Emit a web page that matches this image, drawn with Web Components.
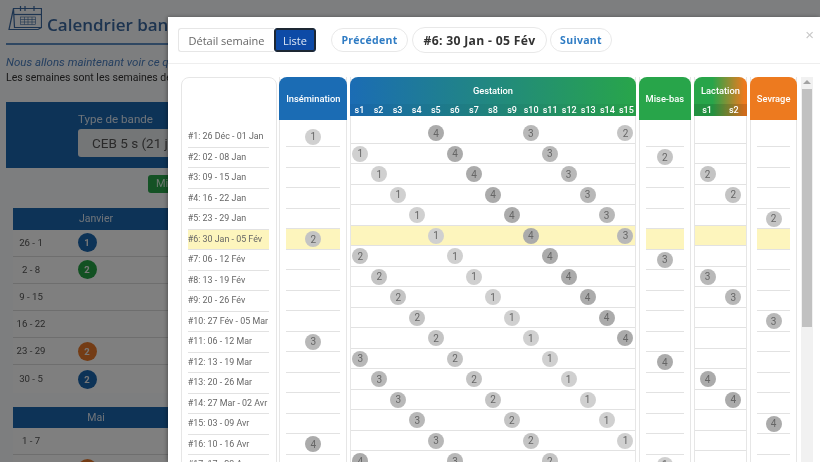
<!DOCTYPE html>
<html lang="fr">
<head>
<meta charset="utf-8">
<title>Calendrier de bande</title>
<style>
    html, body { margin: 0; height: 100%; overflow: hidden; }
    body { font-family: Roboto, "Liberation Sans", sans-serif; }
</style>
</head>
<body>
<band-page></band-page>
<planning-modal>
    <seg-toggle slot="nav"></seg-toggle>
    <pill-btn slot="nav" style="margin-left:15px;width:77px">Précédent</pill-btn>
    <pill-btn slot="nav" kind="title" style="margin-left:4px;width:135px">#6: 30 Jan - 05 Fév</pill-btn>
    <pill-btn slot="nav" style="margin-left:3px;width:62px">Suivant</pill-btn>

    <week-labels></week-labels>
    <phase-col label="Insémination" w="68" bg="#1b6cb4" kind="insem"></phase-col>
    <phase-col label="Gestation" w="286" bg="linear-gradient(90deg,#1b6cb4,#28a54a)" kind="gest" subs="15"></phase-col>
    <phase-col label="Mise-bas" w="52.4" bg="#28a54a" kind="mise"></phase-col>
    <phase-col label="Lactation" w="53.5" bg="linear-gradient(90deg,#28a54a 35%,#ed7a1f 95%)" kind="lact" subs="2"></phase-col>
    <phase-col label="Sevrage" w="47.4" bg="#ed7a1f" kind="sev"></phase-col>
    <fake-scroll></fake-scroll>
</planning-modal>

<script>
const WEEKS = ["26 Déc - 01 Jan", "02 - 08 Jan", "09 - 15 Jan", "16 - 22 Jan", "23 - 29 Jan", "30 Jan - 05 Fév",
    "06 - 12 Fév", "13 - 19 Fév", "20 - 26 Fév", "27 Fév - 05 Mar", "06 - 12 Mar", "13 - 19 Mar", "20 - 26 Mar",
    "27 Mar - 02 Avr", "03 - 09 Avr", "10 - 16 Avr", "17 - 23 Avr"];
const CURRENT = 6;

// a batch starts every 5 weeks and the whole cycle loops over 20 weeks
function batchAt(row, offset) {
    for (let b = 1; b <= 4; b++) {
        const start = 1 + 5 * (b - 1);
        if ((start + offset - 1) % 20 + 1 === row) return b;
    }
    return 0;
}

class BatchDot extends HTMLElement {
    connectedCallback() {
        const n = this.getAttribute("n");
        const bg = { 1: "#d0d0d0", 2: "#c4c4c4", 3: "#b8b8b8", 4: "#ababab" }[n];
        this.attachShadow({ mode: "open" }).innerHTML = `
            <style>
                :host {
                    display: flex;
                    width: 16px;
                    height: 16px;
                    border-radius: 50%;
                    align-items: center;
                    justify-content: center;
                    background: ${bg};
                    color: #666;
                    font: 400 10px Roboto, sans-serif;
                }
            </style>
            <slot>${n}</slot>`;
    }
}
customElements.define("batch-dot", BatchDot);

class BandPage extends HTMLElement {
    constructor() {
        super();
        const rows1 = [["26 - 1", "#1a66ae", 1], ["2 - 8", "#25a244", 2], ["9 - 15"], ["16 - 22"], ["23 - 29", "#e8792a", 2], ["30 - 5", "#1a66ae", 2]];
        const rows2 = [["1 - 7"], ["8 - 14", "#e8792a", 1]];
        const row = r => `<div class="row"><span class="d">${r[0]}</span>${r[1] ? `<span class="b" style="background:${r[1]}">${r[2]}</span>` : ""}</div>`;
        this.attachShadow({ mode: "open" }).innerHTML = `
            <style>
                :host {
                    display: block;
                    width: 820px;
                    height: 462px;
                    overflow: hidden;
                    background: #fbfcfe;
                    color: #444;
                    font: 400 11.5px Roboto, sans-serif;
                    filter: blur(.4px);
                }
                .title {
                    display: flex;
                    align-items: flex-end;
                    gap: 5px;
                    height: 31px;
                    margin: 0 6px;
                    padding-left: 2px;
                    padding-top: 5px;
                    box-sizing: border-box;
                }
                h1 {
                    margin: 0 0 -5px;
                    font: 600 17px "Open Sans", sans-serif;
                    color: #3a68a0;
                    white-space: nowrap;
                }
                hr {
                    margin: 12px 6px 0;
                    border: 0;
                    height: 2px;
                    background: #5e8fc4;
                }
                .lead { margin: 10px 6px 0; line-height: 15px; white-space: nowrap; }
                .lead i { color: #4a7fc0; display: block; }
                .lead span { display: block; font-size: 10.5px; color: #333; }
                .box {
                    margin: 17px 6px 0;
                    height: 66px;
                    background: #1a66ae;
                    color: #dbe6f2;
                    padding: 10px 0 0 72px;
                    box-sizing: border-box;
                }
                .box label { display: block; line-height: 14px; font-size: 11.6px; }
                .sel {
                    width: 130px;
                    height: 28px;
                    margin-top: 3px;
                    background: #e9ecef;
                    border-radius: 3px;
                    color: #555;
                    font-size: 13.5px;
                    line-height: 28px;
                    padding-left: 14px;
                    white-space: nowrap;
                }
                .btn {
                    margin: 7px 0 0 148px;
                    width: 60px;
                    height: 18px;
                    border-radius: 3px;
                    background: #28a54a;
                    color: #d8f0de;
                    font-size: 11px;
                    line-height: 18px;
                    padding-left: 8px;
                }
                .mon {
                    margin: 15px 0 0 13px;
                    width: 166px;
                }
                .mon + .mon { margin-top: 14px; }
                .head {
                    height: 21.5px;
                    background: #1a66ae;
                    color: #dbe6f2;
                    text-align: center;
                    font-size: 10.5px;
                    line-height: 21px;
                }
                .row {
                    display: flex;
                    align-items: center;
                    height: 27.2px;
                    box-sizing: border-box;
                    border-bottom: 1px solid #ddd;
                    background: #fff;
                }
                .row:last-child { border-bottom: 0; }
                .d { width: 36px; text-align: center; color: #555; font-size: 9.6px; padding-bottom: 1px; }
                .b {
                    display: flex;
                    width: 19px;
                    height: 19px;
                    margin-left: 28.5px;
                    border-radius: 50%;
                    align-items: center;
                    justify-content: center;
                    color: #eee;
                    font-size: 9.5px;
                    font-weight: 700;
                }
            </style>
            <div class="title">
                <svg width="34" height="26" viewBox="0 0 34 26" fill="none" stroke="#3a68a0" stroke-width="1.2">
                    <path d="M5.5 3.5H33.5V22.5H6.5Z M5.5 3.5L1 24.5H30L33.5 22.5"/>
                    <path d="M12.5 1V6 M17 1V6 M26 1V6"/>
                    <path d="M6 9.5H33.5"/>
                    <rect x="12.5" y="12" width="15" height="7.5" stroke-width=".6"/>
                    <path d="M12.5 14.5H27.5 M12.5 17H27.5 M16.5 12V19.5 M20 12V19.5 M24 12V19.5" stroke-width=".6"/>
                </svg>
                <h1>Calendrier bande</h1>
            </div>
            <hr>
            <div class="lead"><i>Nous allons maintenant voir ce que</i><span>Les semaines sont les semaines de</span></div>
            <div class="box"><label>Type de bande</label><div class="sel">CEB 5 s (21 j)</div></div>
            <div class="btn">Mise-bas</div>
            <div class="mon"><div class="head">Janvier</div>${rows1.map(row).join("")}</div>
            <div class="mon"><div class="head">Mai</div>${rows2.map(row).join("")}</div>`;
    }
}
customElements.define("band-page", BandPage);

class SegToggle extends HTMLElement {
    constructor() {
        super();
        this.attachShadow({ mode: "open" }).innerHTML = `
            <style>
                :host { display: flex; height: 24px; font: 400 11px "Open Sans", sans-serif; }
                div { display: flex; align-items: center; justify-content: center; box-sizing: border-box; }
                .a { width: 96px; border: 1px solid #e6e6e6; border-right: 0; border-radius: 3px 0 0 3px; color: #666; }
                .b { width: 42px; background: #0d4aa6; border: 1px solid #1d2733; box-shadow: inset 0 0 0 1px #1d2733; border-radius: 3px; color: #dfe8f5; }
            </style>
            <div class="a">Détail semaine</div><div class="b">Liste</div>`;
    }
}
customElements.define("seg-toggle", SegToggle);

class PillBtn extends HTMLElement {
    constructor() {
        super();
        this.attachShadow({ mode: "open" }).innerHTML = `
            <style>
                :host {
                    display: flex;
                    height: 24px;
                    box-sizing: border-box;
                    align-items: center;
                    justify-content: center;
                    border: 1px solid #e8e8e8;
                    border-radius: 12px;
                    color: #2f7cc4;
                    font: 700 10.5px "Open Sans", sans-serif;
                    letter-spacing: .3px;
                    white-space: nowrap;
                }
                :host([kind="title"]) {
                    height: 26px;
                    border-radius: 13px;
                    color: #333;
                    font-size: 12.2px;
                }
            </style>
            <slot></slot>`;
    }
}
customElements.define("pill-btn", PillBtn);

class PlanningModal extends HTMLElement {
    constructor() {
        super();
        this.attachShadow({ mode: "open" }).innerHTML = `
            <style>
                :host {
                    position: fixed;
                    inset: 0;
                    display: block;
                    background: rgba(0, 0, 0, .5);
                    overflow: hidden;
                }
                .dlg {
                    position: absolute;
                    left: 168px;
                    top: 17px;
                    width: 652px;
                    height: 445px;
                    background: #fff;
                    box-shadow: -1px 0 4px rgba(0, 0, 0, .35);
                    overflow: hidden;
                }
                .inner { filter: blur(.3px); }
                header {
                    display: flex;
                    align-items: center;
                    height: 47px;
                    padding: 0 10px;
                    box-sizing: border-box;
                    border-bottom: 1px solid #eee;
                    position: relative;
                }
                .x {
                    position: absolute;
                    right: 6px;
                    top: 12px;
                    color: #c8c8c8;
                    font: 400 15px/12px "Liberation Sans", sans-serif;
                }
                main {
                    display: flex;
                    align-items: flex-start;
                    gap: 2.7px;
                    padding: 12.5px 0 0 12.7px;
                }
            </style>
            <div class="dlg">
                <div class="inner">
                    <header><slot name="nav"></slot><span class="x">×</span></header>
                    <main><slot></slot></main>
                </div>
            </div>`;
    }
}
customElements.define("planning-modal", PlanningModal);

class WeekLabels extends HTMLElement {
    constructor() {
        super();
        const rows = WEEKS.map((w, i) => `<div class="r${i + 1 === CURRENT ? " on" : ""}">#${i + 1}: ${w}</div>`).join("");
        this.attachShadow({ mode: "open" }).innerHTML = `
            <style>
                :host {
                    display: block;
                    flex: none;
                    width: 95.9px;
                    height: 500px;
                    box-sizing: border-box;
                    padding: 49.8px 7px 0 6px;
                    border: 1px solid #e6e6e6;
                    border-radius: 8px 8px 0 0;
                    font: 400 8.9px Roboto, sans-serif;
                    color: #666;
                }
                .r {
                    height: 20.5px;
                    box-sizing: border-box;
                    line-height: 18.5px;
                    border-bottom: 1px solid #e2e2e2;
                    white-space: nowrap;
                }
                .on { background: #fdf5bd; }
            </style>
            ${rows}`;
    }
}
customElements.define("week-labels", WeekLabels);

class PhaseCol extends HTMLElement {
    connectedCallback() {
        const kind = this.getAttribute("kind");
        const subs = +this.getAttribute("subs") || 0;
        const tall = !subs;
        const dot = b => `<batch-dot n="${b}"></batch-dot>`;
        const cell = (row) => {
            let out = "";
            if (kind === "insem" && batchAt(row, 0)) out = dot(batchAt(row, 0));
            if (kind === "mise" && batchAt(row, 16)) out = dot(batchAt(row, 16));
            if (kind === "sev" && batchAt(row, 19)) out = dot(batchAt(row, 19));
            if (subs) {
                const first = kind === "gest" ? 1 : 17;
                for (let s = 0; s < subs; s++) {
                    const b = batchAt(row, first + s);
                    out += `<div class="c">${b ? dot(b) : ""}</div>`;
                }
            }
            return `<div class="r${row === CURRENT ? " on" : ""}">${out}</div>`;
        };
        const rows = WEEKS.map((w, i) => cell(i + 1)).join("");
        const subHead = subs ? `<div class="subs">${Array.from({ length: subs }, (_, i) => `<span>s${i + 1}</span>`).join("")}</div>` : "";
        this.attachShadow({ mode: "open" }).innerHTML = `
            <style>
                :host {
                    display: block;
                    flex: none;
                    width: ${this.getAttribute("w")}px;
                    height: 500px;
                    box-sizing: border-box;
                    border: solid #e6e6e6;
                    border-width: 0 1px;
                    font: 400 10px Roboto, sans-serif;
                }
                .head {
                    margin: 0 -1px;
                    border-radius: 8px 8px 0 0;
                    background: ${this.getAttribute("bg")};
                    color: #fff;
                    text-align: center;
                    font-weight: 500;
                    font-size: 9.3px;
                    height: ${tall ? 43.5 : 39.8}px;
                    display: flex;
                    flex-direction: column;
                }
                .t { flex: 1; display: flex; align-items: center; justify-content: center; ${tall ? "" : "padding-top:1px;"} }
                .subs {
                    display: grid;
                    grid-template-columns: repeat(${subs}, 1fr);
                    height: 12px;
                    line-height: 12px;
                    font-size: 9px;
                    background: rgba(0, 0, 0, ${kind === "lact" ? .12 : .04});
                }
                .body { padding: ${tall ? "6.8px 6px 0" : "6.9px 0 0"}; }
                .r {
                    height: 20.5px;
                    box-sizing: border-box;
                    border-bottom: 1px solid #e2e2e2;
                    display: ${subs ? "grid" : "flex"};
                    ${subs ? `grid-template-columns: repeat(${subs}, 1fr);` : ""}
                    align-items: center;
                    justify-content: center;
                }
                .c { display: flex; justify-content: center; align-items: center; height: 20px; min-width: 0; }
                .on { background: #fdf5bd; }
            </style>
            <div class="head"><div class="t">${this.getAttribute("label")}</div>${subHead}</div>
            <div class="body">${rows}</div>`;
    }
}
customElements.define("phase-col", PhaseCol);

class FakeScroll extends HTMLElement {
    constructor() {
        super();
        this.attachShadow({ mode: "open" }).innerHTML = `
            <style>
                :host {
                    display: block;
                    flex: none;
                    width: 12px;
                    height: 400px;
                    margin-left: 1.2px;
                    background: #f1f1f1;
                }
                svg { display: block; margin: 3px auto 0; }
                .thumb { width: 10px; margin: 5px auto 0; height: 238px; background: #c1c1c1; }
            </style>
            <svg width="8" height="4" viewBox="0 0 8 4"><path d="M4 0L8 4H0Z" fill="#a3a3a3"/></svg>
            <div class="thumb"></div>`;
    }
}
customElements.define("fake-scroll", FakeScroll);
</script>
</body>
</html>
